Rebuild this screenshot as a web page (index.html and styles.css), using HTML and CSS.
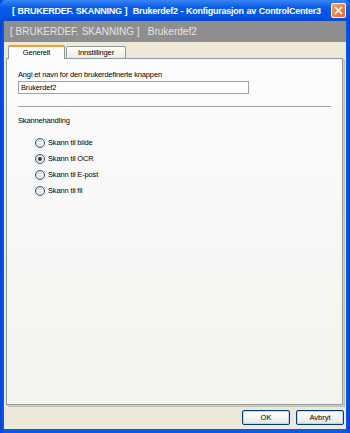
FILE: index.html
```html
<!DOCTYPE html>
<html lang="no">
<head>
    <meta charset="UTF-8">
    <title>Brukerdef2 - Konfigurasjon av ControlCenter3</title>
    <link rel="stylesheet" href="styles.css">
</head>
<body>
    <div class="window">
        <div class="titlebar">
            <span class="title">[ BRUKERDEF. SKANNING ]  Brukerdef2 - Konfigurasjon av ControlCenter3</span>
            <span class="close">
                <svg width="9" height="9" viewBox="0 0 9 9"><path d="M1 1 L8 8 M8 1 L1 8" stroke="#fff" stroke-width="1.6"/></svg>
            </span>
        </div>
        <div class="client">
            <div class="header">[ BRUKERDEF. SKANNING ]   Brukerdef2</div>
            <div class="tabs">
                <div class="tab active">Generelt</div>
                <div class="tab">Innstillinger</div>
            </div>
            <div class="panel">
                <label class="field-label" for="name">Angi et navn for den brukerdefinerte knappen</label>
                <input class="text" id="name" type="text" value="Brukerdef2">
                <div class="sep"></div>
                <div class="group-label">Skannehandling</div>
                <div class="radios">
                    <div class="radio"><span class="dot"></span>Skann til bilde</div>
                    <div class="radio"><span class="dot checked"></span>Skann til OCR</div>
                    <div class="radio"><span class="dot"></span>Skann til E-post</div>
                    <div class="radio"><span class="dot"></span>Skann til fil</div>
                </div>
            </div>
            <div class="buttons">
                <button class="btn">OK</button>
                <button class="btn">Avbryt</button>
            </div>
        </div>
    </div>
</body>
</html>
```
FILE: styles.css
```css
body {
    margin: 0;
    width: 350px;
    height: 433px;
    overflow: hidden;
    font-family: "Liberation Sans", Arial, sans-serif;
    font-size: 7.5px;
    letter-spacing: -0.15px;
}
.window {
    width: 350px;
    height: 433px;
    box-sizing: border-box;
    background: linear-gradient(to right, #0041d8, #0a5ce8 4px, #0a5ce8 346px, #0041d8);
    padding: 0 4px 4px 4px;
    display: flex;
    flex-direction: column;
}
.titlebar {
    height: 21px;
    margin: 0 -4px;
    padding: 0 4px 0 12px;
    display: flex;
    align-items: center;
    justify-content: space-between;
    background: linear-gradient(#3a86f4, #0a5ce8 35%, #0553e0 80%, #0647c8);
    border-radius: 6px 6px 0 0;
}
.title {
    color: #fff;
    font-weight: bold;
    font-size: 9px;
    letter-spacing: -0.25px;
    word-spacing: 0.5px;
    white-space: pre;
    min-width: 0;
    overflow: hidden;
}
.close {
    flex-shrink: 0;
    width: 15px;
    height: 15px;
    box-sizing: border-box;
    border: 1px solid #fff;
    border-radius: 2px;
    background: linear-gradient(135deg, #f0a070, #e06a34);
    display: flex;
    align-items: center;
    justify-content: center;
}
.client {
    flex: 1;
    background: #ece9d8;
    display: flex;
    flex-direction: column;
}
.header {
    height: 21px;
    background: #8e8e8e;
    color: #e4e4e4;
    font-size: 10px;
    letter-spacing: 0;
    padding-left: 6px;
    display: flex;
    align-items: center;
    white-space: pre;
}
.tabs {
    display: flex;
    padding: 2px 0 0 3px;
    height: 14px;
    align-items: flex-end;
}
.tab {
    color: #000;
    border: 1px solid #919b9c;
    border-bottom: none;
    background: linear-gradient(#fff, #ecebe5);
    height: 12px;
    line-height: 12px;
    width: 60px;
    box-sizing: border-box;
    text-align: center;
    margin-left: 1px;
    border-radius: 2px 2px 0 0;
}
.tab.active {
    height: 14px;
    line-height: 12px;
    background: #fcfcfe;
    border-top: 2px solid #f0a030;
    width: 57px;
    margin-bottom: -1px;
    position: relative;
}
.panel {
    margin: 0 3px 0 2px;
    height: 347px;
    box-sizing: border-box;
    border: 1px solid #919b9c;
    box-shadow: 1px 1px 0 #d0d0bf, 2px 2px 0 #c0bfb2;
    background: linear-gradient(#fcfcfe, #f4f3ee);
    padding: 11px 11px 0 11px;
}
.field-label {
    display: block;
    color: #000;
    margin-bottom: 2px;
}
.text {
    display: block;
    width: 231px;
    height: 13px;
    box-sizing: border-box;
    border: 1px solid #a0a0a0;
    background: #fff;
    font-family: inherit;
    font-size: 7.5px;
    letter-spacing: -0.15px;
    padding: 0 2px;
    margin: 0;
}
.sep {
    height: 1px;
    background: #a0a0a0;
    border-bottom: 1px solid #fff;
    margin: 12px 0 8px 0;
}
.radios {
    padding: 12px 0 0 17px;
    display: flex;
    flex-direction: column;
    gap: 5px;
}
.radio {
    display: flex;
    align-items: center;
    height: 11px;
}
.dot {
    width: 10px;
    height: 10px;
    box-sizing: border-box;
    border: 1px solid #1c5180;
    border-radius: 50%;
    background: linear-gradient(135deg, #dcdcd7, #fff);
    margin-right: 3px;
    position: relative;
}
.dot.checked::after {
    content: "";
    position: absolute;
    left: 2px;
    top: 2px;
    width: 4px;
    height: 4px;
    border-radius: 50%;
    background: #3a3a3a;
}
.buttons {
    display: flex;
    justify-content: flex-end;
    gap: 6px;
    padding: 5px 2px 0 0;
}
.btn {
    width: 48px;
    height: 15px;
    box-sizing: border-box;
    border: 1px solid #003c74;
    border-radius: 2px;
    background: linear-gradient(#fff, #ecebe6 85%, #d6d0c5);
    font-family: inherit;
    font-size: 7.5px;
    color: #000;
    padding: 0;
    box-shadow: inset 0 0 0 1px #c3d3fd;
}
```
